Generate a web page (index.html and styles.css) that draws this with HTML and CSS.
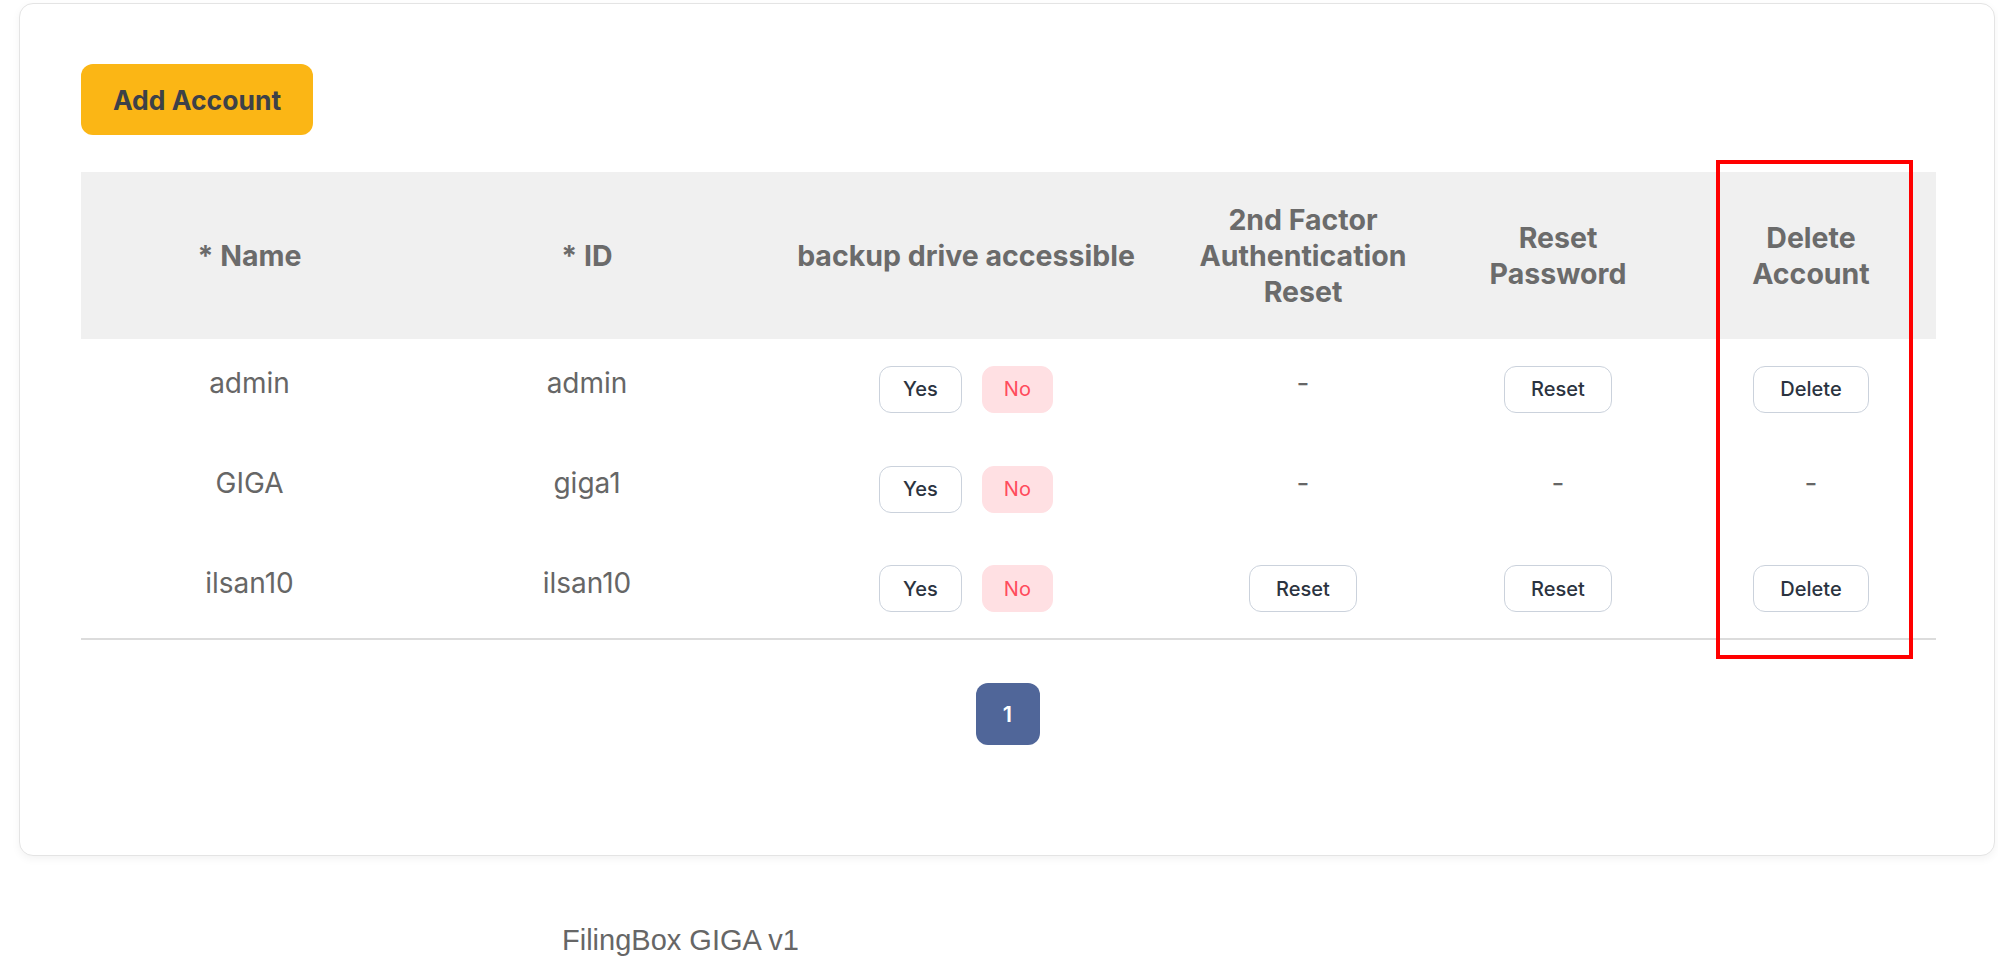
FILE: index.html
```html
<!DOCTYPE html>
<html lang="en">
<head>
    <meta charset="UTF-8">
    <meta name="viewport" content="width=device-width, initial-scale=1.0">
    <title>FilingBox GIGA - Accounts</title>
    <link rel="stylesheet" href="styles.css">
</head>
<body>
    <div class="card">
        <button class="btn-add">Add Account</button>

        <div class="table-wrap">
            <table class="account-table">
                <colgroup>
                    <col class="col-name">
                    <col class="col-id">
                    <col class="col-backup">
                    <col class="col-otp">
                    <col class="col-pw">
                    <col class="col-del">
                </colgroup>
                <thead>
                    <tr>
                        <th>* Name</th>
                        <th>* ID</th>
                        <th>backup drive accessible</th>
                        <th>2nd Factor<br>Authentication<br>Reset</th>
                        <th>Reset<br>Password</th>
                        <th>Delete<br>Account</th>
                    </tr>
                </thead>
                <tbody>
                    <tr>
                        <td class="txt">admin</td>
                        <td class="txt">admin</td>
                        <td><div class="yes-no"><button class="btn-yes">Yes</button><button class="btn-no">No</button></div></td>
                        <td class="txt">-</td>
                        <td><button class="btn-action">Reset</button></td>
                        <td><button class="btn-action">Delete</button></td>
                    </tr>
                    <tr>
                        <td class="txt">GIGA</td>
                        <td class="txt">giga1</td>
                        <td><div class="yes-no"><button class="btn-yes">Yes</button><button class="btn-no">No</button></div></td>
                        <td class="txt">-</td>
                        <td class="txt">-</td>
                        <td class="txt">-</td>
                    </tr>
                    <tr>
                        <td class="txt">ilsan10</td>
                        <td class="txt">ilsan10</td>
                        <td><div class="yes-no"><button class="btn-yes">Yes</button><button class="btn-no">No</button></div></td>
                        <td><button class="btn-action">Reset</button></td>
                        <td><button class="btn-action">Reset</button></td>
                        <td><button class="btn-action">Delete</button></td>
                    </tr>
                </tbody>
            </table>

            <!-- annotation box around the delete column -->
            <div class="highlight"></div>
        </div>

        <div class="pagination">
            <button class="page-btn active">1</button>
        </div>
    </div>

    <div class="footer">FilingBox GIGA v1</div>
</body>
</html>
```

FILE: styles.css
```css
* {
    margin: 0;
    padding: 0;
    box-sizing: border-box;
}

body {
    font-family: Inter, 'Noto Sans', Arial, sans-serif;
    background: #fff;
    color: #666;
    width: 1998px;
    height: 960px;
    overflow: hidden;
}

.card {
    margin: 3px 3px 0 19px;
    padding: 60px 60px 110px 61px;
    background: #fff;
    border: 1px solid #e4e4e4;
    border-radius: 14px;
    box-shadow: 0 3px 8px rgba(0, 0, 0, 0.05);
}

.btn-add {
    display: block;
    width: 232px;
    height: 71px;
    background: #fbb615;
    border: none;
    border-radius: 12px;
    font-family: Inter, Arial, sans-serif;
    font-size: 26.5px;
    font-weight: 700;
    color: #3d4148;
    cursor: pointer;
}

.table-wrap {
    position: relative;
    margin-top: 37px;
}

.account-table {
    width: 1855px;
    border-collapse: collapse;
    table-layout: fixed;
}

.col-name { width: 337px; }
.col-id { width: 338px; }
.col-backup { width: 420px; }
.col-otp { width: 254px; }
.col-pw { width: 256px; }
.col-del { width: 250px; }

.account-table th {
    height: 167px;
    background: #f0f0f0;
    font-size: 28.5px;
    font-weight: 700;
    line-height: 36px;
    color: #6b6b6b;
    text-align: center;
    vertical-align: middle;
}

.account-table td {
    height: 100px;
    text-align: center;
    vertical-align: middle;
    font-size: 28px;
    color: #666;
}

.account-table td.txt {
    padding-bottom: 12px;
}

.account-table tbody tr:last-child td {
    border-bottom: 2px solid #dcdcdc;
}

.yes-no {
    display: flex;
    justify-content: center;
    gap: 20px;
}

.btn-yes,
.btn-no,
.btn-action {
    height: 47px;
    padding: 0 21px;
    border: 1.5px solid #cbd2dc;
    border-radius: 12px;
    background: #fff;
    font-family: Inter, Arial, sans-serif;
    font-size: 20px;
    font-weight: 500;
    color: #2b3340;
    cursor: pointer;
}

.btn-yes {
    padding: 0 23px;
}

.btn-no {
    background: #ffe0e3;
    border-color: #ffe0e3;
    color: #ff4b5c;
    font-weight: 400;
}

.btn-action {
    padding: 0 26px;
}

.highlight {
    position: absolute;
    left: 1635px;
    top: -12px;
    width: 197px;
    height: 499px;
    border: 4px solid #ff0000;
    pointer-events: none;
}

.pagination {
    display: flex;
    justify-content: center;
    margin-top: 43px;
}

.page-btn {
    width: 64px;
    height: 62px;
    border: none;
    border-radius: 12px;
    background: #eee;
    font-family: Inter, Arial, sans-serif;
    font-size: 22px;
    font-weight: 600;
    color: #444;
}

.page-btn.active {
    background: #506699;
    color: #fff;
}

.footer {
    margin: 68px 0 0 562px;
    font-family: 'Liberation Sans', Arial, sans-serif;
    font-size: 29px;
    color: #666;
}
```
